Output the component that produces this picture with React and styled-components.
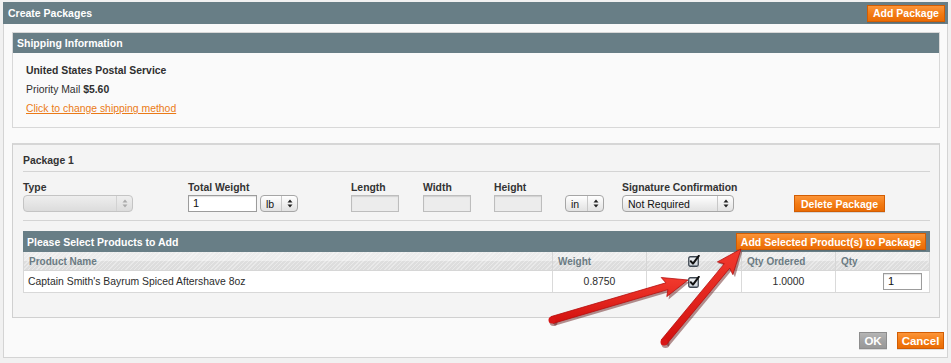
import React from "react";
import styled, { createGlobalStyle } from "styled-components";

const Global = createGlobalStyle`
  html, body { margin: 0; padding: 0; }
  body {
    background: #f1f1f1;
    font-family: "Liberation Sans", Arial, Helvetica, sans-serif;
    font-size: 10.4px;
    color: #2f2f2f;
    width: 951px;
    height: 363px;
    overflow: hidden;
  }
`;

const Page = styled.div`
  position: relative;
  width: 951px;
  height: 363px;
  padding: 2px 3px 0 3px;
  box-sizing: border-box;
`;

const Window = styled.div`
  width: 945px;
`;

const TitleBar = styled.div`
  height: 22px;
  background: #687e86;
  display: flex;
  align-items: center;
  justify-content: space-between;
  padding: 0 3px 0 5px;
  box-sizing: border-box;
`;

const Title = styled.div`
  color: #fff;
  font-weight: bold;
  font-size: 10.5px;
`;

const OrangeButton = styled.button`
  font-family: inherit;
  font-weight: bold;
  font-size: ${(p) => p.$fs || 10.5}px;
  color: #fff;
  height: ${(p) => p.$h || 17}px;
  width: ${(p) => p.$w}px;
  padding: 0;
  border: 1px solid #d25d03;
  background: linear-gradient(#fc9438, #f27a12 55%, #ea6c05);
  box-shadow: 0 1px 0 rgba(0, 0, 0, 0.12);
  cursor: pointer;
  white-space: nowrap;
`;

const GrayButton = styled(OrangeButton)`
  border-color: #8d8d8d;
  background: linear-gradient(#b5b5b5, #a2a2a2 55%, #989898);
`;

const Content = styled.div`
  background: #fafafa;
  border: 1px solid #d4d4d4;
  border-top: none;
  padding: 8px 3px 8px 8px;
  height: 334px;
  box-sizing: border-box;
  display: flex;
  flex-direction: column;
`;

const ShippingBox = styled.div`
  border: 1px solid #d8d8d8;
  background: #fafafa;
  height: 96px;
  margin-right: 4px;
  box-sizing: border-box;
`;

const SectionHeader = styled.div`
  height: ${(p) => p.$h || 20}px;
  background: #687e86;
  color: #fff;
  font-weight: bold;
  font-size: 10.5px;
  display: flex;
  align-items: center;
  justify-content: space-between;
  padding: 0 4px 0 4px;
  box-sizing: border-box;
`;

const ShipBody = styled.div`
  padding: 8px 13px 0 13px;
  line-height: 19px;
`;

const Line = styled.div`
  font-weight: ${(p) => (p.$bold ? "bold" : "normal")};
`;

const Link = styled.a`
  color: #eb7a17;
  text-decoration: underline;
`;

const PackageBox = styled.div`
  margin: 15px 4px 0 0;
  border: 1px solid #d0d0d0;
  border-top: 2px solid #d6d6d6;
  background: #f4f4f4;
  height: 175px;
  box-sizing: border-box;
  padding: 0 9px 0 10px;
`;

const PackageTitle = styled.div`
  font-weight: bold;
  color: #333;
  line-height: 13px;
  padding: 9px 0 4px 0;
  border-bottom: 1px solid #d4d4d4;
`;

const FieldsRow = styled.div`
  display: flex;
  align-items: flex-end;
  padding: 9px 0 8px 0;
  border-bottom: 1px solid #d4d4d4;
`;

const Field = styled.div`
  width: ${(p) => p.$w}px;
  flex: none;
  display: flex;
  flex-direction: column;
  gap: 1px;
`;

const Label = styled.div`
  font-weight: bold;
  color: #333;
  line-height: 13px;
  height: 13px;
`;

const Controls = styled.div`
  display: flex;
  gap: 3px;
  align-items: center;
`;

const TextInput = styled.div`
  width: ${(p) => p.$w}px;
  height: 17px;
  box-sizing: border-box;
  border: 1px solid ${(p) => (p.$disabled ? "#bdbdbd" : "#9c9c9c")};
  background: ${(p) => (p.$disabled ? "#ececec" : "#fff")};
  box-shadow: inset 0 1px 1px rgba(0, 0, 0, 0.12);
  font-size: 11px;
  line-height: 15px;
  padding-left: 4px;
  color: #111;
`;

const SelectBox = styled.div`
  width: ${(p) => p.$w}px;
  height: 17px;
  box-sizing: border-box;
  border: 1px solid ${(p) => (p.$disabled ? "#c4c4c4" : "#a6a6a6")};
  border-radius: 4px;
  background: ${(p) =>
    p.$disabled
      ? "linear-gradient(#eeeeee, #dcdcdc)"
      : "linear-gradient(#ffffff, #f0f0f0 50%, #e2e2e2)"};
  display: flex;
  align-items: center;
  font-size: 10.5px;
  color: #111;
`;

const SelectText = styled.span`
  flex: 1;
  padding-left: 5px;
  white-space: nowrap;
  overflow: hidden;
`;

const SelectArrow = styled.span`
  width: 15px;
  height: 100%;
  border-left: 1px solid ${(p) => (p.$disabled ? "#d2d2d2" : "#c8c8c8")};
  display: flex;
  align-items: center;
  justify-content: center;
`;

const ProductsSection = styled.div`
  margin-top: 10px;
`;

const Table = styled.div`
  border: 1px solid #d8d8d8;
  border-top: none;
  display: grid;
  grid-template-columns: 528px 94px 95px 94px 1fr;
`;

const HeadCell = styled.div`
  height: 19px;
  box-sizing: border-box;
  background: repeating-linear-gradient(
      135deg,
      rgba(255, 255, 255, 0.35) 0 1px,
      rgba(255, 255, 255, 0) 1px 3px
    ),
    linear-gradient(#ececec 0, #ececec 50%, #dedede 50%, #dcdcdc);
  border-left: ${(p) => (p.$first ? "none" : "1px solid #d6d6d6")};
  border-bottom: 1px solid #d6d6d6;
  color: #6b7b83;
  font-weight: bold;
  font-size: 10px;
  display: flex;
  align-items: center;
  justify-content: ${(p) => (p.$center ? "center" : "flex-start")};
  padding-left: ${(p) => (p.$center ? 0 : 5)}px;
`;

const Cell = styled.div`
  height: 21px;
  box-sizing: border-box;
  background: #fff;
  border-left: ${(p) => (p.$first ? "none" : "1px solid #dadada")};
  display: flex;
  align-items: center;
  justify-content: ${(p) => p.$align || "flex-start"};
  padding: ${(p) => (p.$align === "flex-end" ? "0 7px 0 0" : p.$align ? "0" : "0 0 0 4px")};
  font-size: 10.4px;
  color: #2c2c2c;
`;

const Footer = styled.div`
  margin-top: auto;
  display: flex;
  justify-content: flex-end;
  gap: 10px;
  padding-right: 0;
`;

const ArrowLayer = styled.svg`
  position: absolute;
  left: 0;
  top: 0;
  pointer-events: none;
`;

const Updown = ({ disabled }) => (
  <svg width="6" height="9" viewBox="0 0 6 9">
    <path d="M3 0.5 L5.5 3.5 H0.5 Z M3 8.5 L5.5 5.5 H0.5 Z" fill={disabled ? "#aaa" : "#222"} />
  </svg>
);

const Select = ({ w, text, disabled }) => (
  <SelectBox $w={w} $disabled={disabled}>
    <SelectText>{text}</SelectText>
    <SelectArrow $disabled={disabled}>
      <Updown disabled={disabled} />
    </SelectArrow>
  </SelectBox>
);

const Check = () => (
  <svg width="12" height="12" viewBox="0 0 12 12">
    <defs>
      <linearGradient id="cbg" x1="0" y1="0" x2="0" y2="1">
        <stop offset="0" stopColor="#f4f6f8" />
        <stop offset="1" stopColor="#c9d0d8" />
      </linearGradient>
    </defs>
    <rect x="0.75" y="1.75" width="9.5" height="9.5" rx="1.5" fill="url(#cbg)" stroke="#3d4650" strokeWidth="1.3" />
    <path d="M2.8 6.2 L5 8.6 L10.8 0.8" fill="none" stroke="#111" strokeWidth="2" strokeLinecap="round" strokeLinejoin="round" />
  </svg>
);

function arrowPoints(tail, tip, shaft, headLen, headHalf) {
  const dx = tip[0] - tail[0];
  const dy = tip[1] - tail[1];
  const L = Math.hypot(dx, dy);
  const ux = dx / L, uy = dy / L;
  const nx = -uy, ny = ux;
  const bx = tip[0] - ux * headLen, by = tip[1] - uy * headLen;
  const s = shaft / 2;
  const pts = [
    [tail[0] + nx * s, tail[1] + ny * s],
    [bx + nx * s, by + ny * s],
    [bx + nx * headHalf - ux * 3, by + ny * headHalf - uy * 3],
    tip,
    [bx - nx * headHalf - ux * 3, by - ny * headHalf - uy * 3],
    [bx - nx * s, by - ny * s],
    [tail[0] - nx * s, tail[1] - ny * s],
  ];
  return pts.map((p) => p.map((v) => v.toFixed(1)).join(",")).join(" ");
}

const RedArrow = ({ tail, tip }) => {
  const pts = arrowPoints(tail, tip, 7, 22, 10);
  const shadow = arrowPoints([tail[0] + 1.5, tail[1] + 2], [tip[0] + 1.5, tip[1] + 2], 8, 22, 11);
  return (
    <g>
      <polygon points={shadow} fill="#5a0c0c" opacity="0.45" strokeLinejoin="round" />
      <circle cx={tail[0] + 1.5} cy={tail[1] + 2} r="4" fill="#5a0c0c" opacity="0.45" />
      <polygon points={pts} fill="url(#redg)" stroke="#b40f0f" strokeWidth="0.8" strokeLinejoin="round" />
      <circle cx={tail[0]} cy={tail[1]} r="3.5" fill="#d81616" />
    </g>
  );
};

export default function App() {
  return (
    <>
      <Global />
      <Page>
        <Window>
          <TitleBar>
            <Title>Create Packages</Title>
            <OrangeButton $w={78} $h={17}>Add Package</OrangeButton>
          </TitleBar>
          <Content>
            <ShippingBox>
              <SectionHeader>Shipping Information</SectionHeader>
              <ShipBody>
                <Line $bold>United States Postal Service</Line>
                <Line>
                  Priority Mail <b>$5.60</b>
                </Line>
                <Line>
                  <Link href="#">Click to change shipping method</Link>
                </Line>
              </ShipBody>
            </ShippingBox>

            <PackageBox>
              <PackageTitle>Package 1</PackageTitle>
              <FieldsRow>
                <Field $w={165}>
                  <Label>Type</Label>
                  <Select w={110} text="" disabled />
                </Field>
                <Field $w={163}>
                  <Label>Total Weight</Label>
                  <Controls>
                    <TextInput $w={69}>1</TextInput>
                    <Select w={38} text="lb" />
                  </Controls>
                </Field>
                <Field $w={72}>
                  <Label>Length</Label>
                  <TextInput $w={48} $disabled />
                </Field>
                <Field $w={71}>
                  <Label>Width</Label>
                  <TextInput $w={48} $disabled />
                </Field>
                <Field $w={71}>
                  <Label>Height</Label>
                  <TextInput $w={48} $disabled />
                </Field>
                <Field $w={57}>
                  <Select w={39} text="in" />
                </Field>
                <Field $w={172}>
                  <Label>Signature Confirmation</Label>
                  <Select w={112} text="Not Required" />
                </Field>
                <Field $w={92}>
                  <OrangeButton $w={91} $h={17}>Delete Package</OrangeButton>
                </Field>
              </FieldsRow>

              <ProductsSection>
                <SectionHeader $h={21}>
                  <span>Please Select Products to Add</span>
                  <OrangeButton $w={190} $h={17}>Add Selected Product(s) to Package</OrangeButton>
                </SectionHeader>
                <Table>
                  <HeadCell $first>Product Name</HeadCell>
                  <HeadCell>Weight</HeadCell>
                  <HeadCell $center>
                    <Check />
                  </HeadCell>
                  <HeadCell>Qty Ordered</HeadCell>
                  <HeadCell>Qty</HeadCell>
                  <Cell $first>Captain Smith's Bayrum Spiced Aftershave 8oz</Cell>
                  <Cell $align="center">0.8750</Cell>
                  <Cell $align="center">
                    <Check />
                  </Cell>
                  <Cell $align="center">1.0000</Cell>
                  <Cell $align="flex-end">
                    <TextInput $w={39}>1</TextInput>
                  </Cell>
                </Table>
              </ProductsSection>
            </PackageBox>

            <Footer>
              <GrayButton $w={28} $h={17} $fs={11.5}>OK</GrayButton>
              <OrangeButton $w={47} $h={17} $fs={11.5}>Cancel</OrangeButton>
            </Footer>
          </Content>
        </Window>
        <ArrowLayer width="951" height="363" viewBox="0 0 951 363">
          <defs>
            <linearGradient id="redg" x1="0" y1="0" x2="0" y2="1">
              <stop offset="0" stopColor="#f23a2e" />
              <stop offset="1" stopColor="#d2100e" />
            </linearGradient>
          </defs>
          <RedArrow tail={[552, 320]} tip={[688, 280]} />
          <RedArrow tail={[664, 342]} tip={[741, 249]} />
        </ArrowLayer>
      </Page>
    </>
  );
}
